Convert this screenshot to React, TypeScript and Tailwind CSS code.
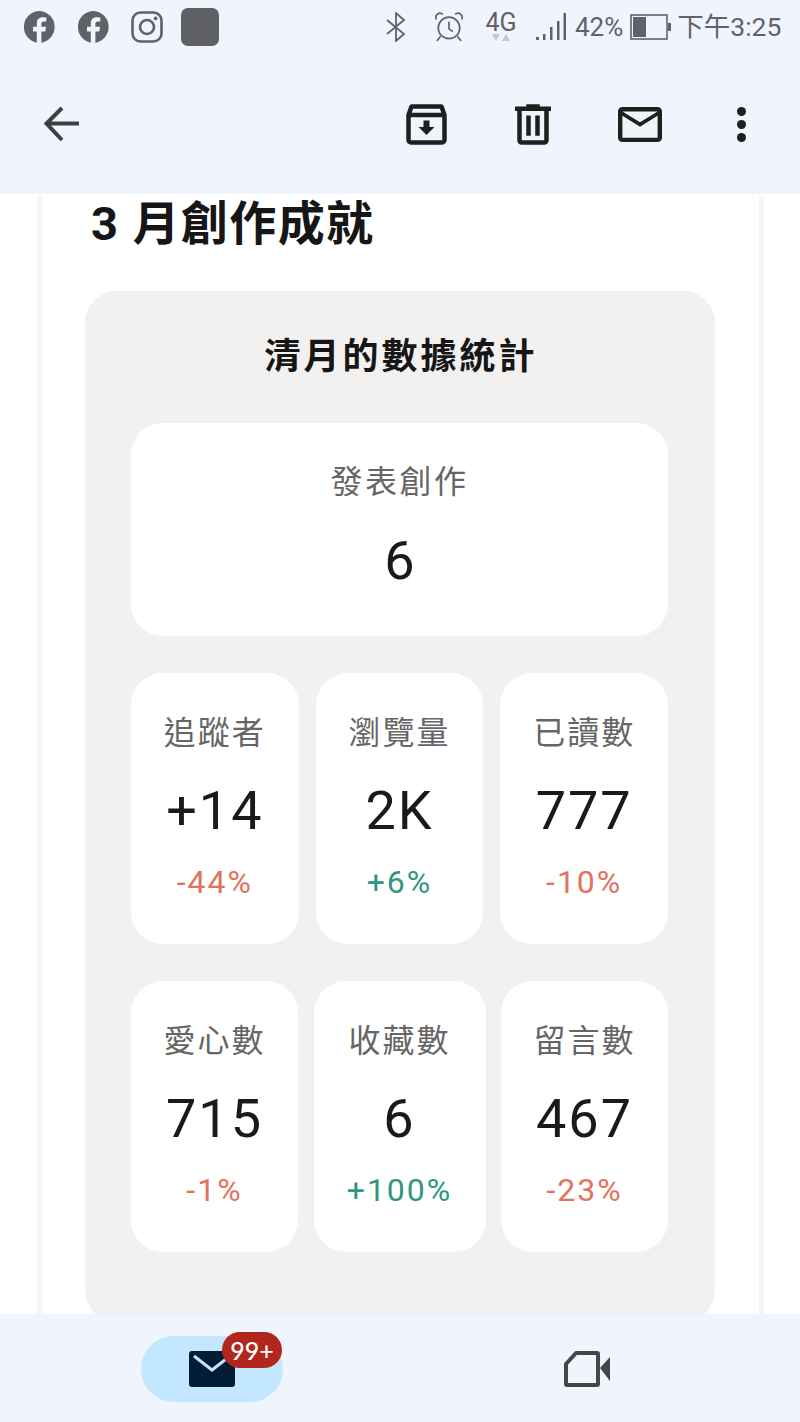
function FacebookIcon() {
  return (
    <svg width="32" height="32" viewBox="0 0 32 32" className="shrink-0">
      <path
        fill="#5f6368"
        d="M16 0a16 16 0 0 0-3.2 31.7V20.4H9v-4.6h3.800v-3.400c0-4 2.300-6.200 5.900-6.200 1.700 0 3.200.3 3.600.4v4h-2.400c-1.900 0-2.500 1.200-2.500 2.400v2.800h4.600l-.7 4.600h-3.900v11.300A16 16 0 0 0 16 0Z"
      />
    </svg>
  );
}

function InstagramIcon() {
  return (
    <svg width="32" height="32" viewBox="0 0 32 32" fill="none" stroke="#5f6368" strokeWidth="2.6" className="ml-[21px] shrink-0">
      <rect x="1.5" y="1.5" width="29" height="29" rx="8" />
      <circle cx="16" cy="16" r="7" />
      <circle cx="24.6" cy="7.4" r="1.9" fill="#5f6368" stroke="none" />
    </svg>
  );
}

function StatusBar() {
  return (
    <div className="flex h-[54px] items-center pl-6">
      <FacebookIcon />
      <div className="ml-[22px]">
        <FacebookIcon />
      </div>
      <InstagramIcon />
      <div className="ml-[18px] h-[38px] w-[38px] rounded-[7px] bg-[#5f6064]" />

      {/* bluetooth */}
      <svg width="20" height="30" viewBox="0 0 20 30" fill="none" stroke="#5f6368" strokeWidth="1.8" className="ml-[167px] shrink-0">
        <path d="M1 8l17 14-8 7V1l8 7L1 22" />
      </svg>
      {/* alarm */}
      <svg width="28" height="32" viewBox="0 0 30 32" fill="none" stroke="#5f6368" strokeWidth="1.8" className="ml-[29px] shrink-0">
        <circle cx="15" cy="17" r="11.5" />
        <path d="M15 10v8l4 3M1.500 8a4.500 4.500 0 0 1 7-5.500M28.500 8a4.500 4.500 0 0 0-7-5.500M6 26l-4 5M24 26l4 5" />
      </svg>
      {/* 4G with data arrows */}
      <div className="ml-[22px] flex w-[32px] shrink-0 flex-col items-center">
        <span className="text-[25px] leading-[22px] text-[#5f6368]">4G</span>
        <svg width="20" height="8" viewBox="0 0 20 8" fill="#c4c6cc">
          <path d="M1 0h8L5 7ZM11 7h8l-4-7Z" />
        </svg>
      </div>
      {/* signal */}
      <svg width="30" height="28" viewBox="0 0 30 28" fill="#5f6368" className="ml-[19px] shrink-0">
        <rect x="0" y="24" width="3" height="3" />
        <rect x="7" y="21" width="2.500" height="6" />
        <rect x="14" y="14" width="2.500" height="13" />
        <rect x="21" y="8" width="2.500" height="19" />
        <rect x="27.500" y="0" width="2.500" height="27" />
      </svg>
      <span className="ml-[9px] text-[26px] leading-none text-[#5f6368]">42%</span>
      {/* battery */}
      <svg width="41" height="26" viewBox="0 0 41 26" fill="none" className="ml-[7px] shrink-0">
        <rect x="1" y="1" width="36" height="24" stroke="#5f6368" strokeWidth="1.6" />
        <rect x="3" y="3" width="13" height="20" fill="#5f6368" />
        <rect x="38" y="9" width="3" height="8" fill="#5f6368" />
      </svg>
      <span className="ml-[6px] whitespace-nowrap text-[26.500px] leading-none text-[#5f6368]">下午3:25</span>
    </div>
  );
}

function Toolbar() {
  return (
    <div className="flex h-[140px] items-center pl-[43px]">
      <svg width="37" height="36" viewBox="0 0 37 36" fill="none" stroke="#3c4043" strokeWidth="4" className="shrink-0">
        <path d="M36 17.500H4M19 2 3.500 17.500 19 34" />
      </svg>
      <svg width="41" height="41" viewBox="0 0 41 41" fill="none" className="ml-[326px] shrink-0">
        <path
          d="M2.500 11 5.500 2.500h30l3 8.500V36a2.500 2.500 0 0 1-2.500 2.500H5A2.500 2.500 0 0 1 2.500 36Z M2.500 11h36"
          stroke="#1f1f1f"
          strokeWidth="4.500"
          strokeLinejoin="round"
        />
        <path d="M17.500 16.500h6v6.500h5L20.500 31 12.500 23h5Z" fill="#1f1f1f" />
      </svg>
      <svg width="36" height="41" viewBox="4 3 16 18" fill="#1f1f1f" className="ml-[68px] shrink-0">
        <path d="M15 4V3H9v1H4v2h1v13c0 1.100.9 2 2 2h10c1.100 0 2-.9 2-2V6h1V4h-5zm2 15H7V6h10v13zM9 8h2v9H9zm4 0h2v9h-2z" />
      </svg>
      <svg width="44" height="35" viewBox="2 4 20 16" fill="#1f1f1f" preserveAspectRatio="none" className="ml-[67px] shrink-0">
        <path d="M20 4H4c-1.100 0-2 .9-2 2v12c0 1.100.9 2 2 2h16c1.100 0 2-.9 2-2V6c0-1.100-.9-2-2-2zm0 14H4V8l8 5 8-5v10zm-8-7L4 6h16l-8 5z" />
      </svg>
      <div className="ml-[75px] flex flex-col gap-[4px]">
        <div className="h-[9px] w-[9px] rounded-full bg-[#1f1f1f]" />
        <div className="h-[9px] w-[9px] rounded-full bg-[#1f1f1f]" />
        <div className="h-[9px] w-[9px] rounded-full bg-[#1f1f1f]" />
      </div>
    </div>
  );
}

type Stat = { label: string; value: string; delta: string; up: boolean; width?: string };

function StatCard({ label, value, delta, up, width }: Stat) {
  return (
    <div className={`flex h-[271px] flex-col items-center rounded-[32px] bg-white pt-[40px] ${width}`}>
      <div className="text-[32px] leading-[40px] tracking-[2px] text-[#666666]">{label}</div>
      <div className="mt-[28px] text-[54px] leading-[60px] tracking-[2px] text-[#1a1a1a]">{value}</div>
      <div className={`mt-[21px] text-[32px] leading-[40px] tracking-[2px] ${up ? "text-[#2f9680]" : "text-[#e4705f]"}`}>
        {delta}
      </div>
    </div>
  );
}

const rowOne: Stat[] = [
  { label: "追蹤者", value: "+14", delta: "-44%", up: false },
  { label: "瀏覽量", value: "2K", delta: "+6%", up: true },
  { label: "已讀數", value: "777", delta: "-10%", up: false },
];

const rowTwo: Stat[] = [
  { label: "愛心數", value: "715", delta: "-1%", up: false, width: "w-[167px]" },
  { label: "收藏數", value: "6", delta: "+100%", up: true, width: "w-[172px]" },
  { label: "留言數", value: "467", delta: "-23%", up: false, width: "w-[167px]" },
];

export default function App() {
  return (
    <div className="flex h-[1422px] w-[800px] flex-col overflow-hidden bg-white font-['Roboto','Noto_Sans_CJK_TC',sans-serif]">
      <header className="h-[194px] shrink-0 bg-[#f0f4fd]">
        <StatusBar />
        <Toolbar />
      </header>

      <main className="min-h-0 flex-1 overflow-hidden">
        <div className="ml-[37px] h-[1200px] w-[727px] border-x-[5px] border-[#f5f5f5] pl-[43px] pr-[44px]">
          <h1 className="ml-[6px] mt-[2px] text-[47px] font-bold leading-[56px] tracking-[1.400px] text-[#161616]">3 月創作成就</h1>

          {/* Stats panel */}
          <div className="mt-[39px] rounded-[32px] bg-[#f2f1f0] pb-[70px] pl-[46px] pr-[47px] pt-[42px]">
            <h2 className="pl-[3px] text-center text-[36px] font-bold leading-[48px] tracking-[3px] text-[#161616]">清月的數據統計</h2>

            <div className="mt-[42px] flex h-[213px] flex-col items-center rounded-[32px] bg-white pt-[39px]">
              <div className="text-[32px] leading-[40px] tracking-[2.500px] text-[#666666]">發表創作</div>
              <div className="mt-[29px] text-[54px] leading-[60px] text-[#1a1a1a]">6</div>
            </div>

            <div className="mt-[37px] grid grid-cols-3 gap-[17px]">
              {rowOne.map((s) => (
                <StatCard key={s.label} {...s} />
              ))}
            </div>

            <div className="mt-[37px] flex justify-between">
              {rowTwo.map((s) => (
                <StatCard key={s.label} {...s} />
              ))}
            </div>
          </div>
        </div>
      </main>

      <footer className="flex h-[108px] shrink-0 items-start bg-[#f0f4fd] pl-[141px] pt-[22px]">
        <div className="relative flex h-[66px] w-[142px] items-center justify-center rounded-[33px] bg-[#c2e7ff]">
          <svg width="46" height="36" viewBox="0 0 46 36" className="shrink-0">
            <rect width="46" height="36" rx="3" fill="#001d35" />
            <path d="M5 5l18 14 18-14" fill="none" stroke="#c2e7ff" strokeWidth="3" />
          </svg>
          <span className="absolute -top-1 left-[81px] flex h-[36px] w-[60px] items-center justify-center rounded-[18px] bg-[#b3261e] font-['Lato',sans-serif] text-[25px] font-medium leading-none text-white">
            99+
          </span>
        </div>
        <svg width="46" height="36" viewBox="0 0 46 36" fill="none" className="ml-[281px] mt-[15px] shrink-0">
          <path d="M2 13 12 2h21a1 1 0 0 1 1 1v30a1 1 0 0 1-1 1H3a1 1 0 0 1-1-1Z" stroke="#444746" strokeWidth="4" strokeLinejoin="round" />
          <path d="M36 17 46 6v24Z" fill="#444746" />
        </svg>
      </footer>
    </div>
  );
}
